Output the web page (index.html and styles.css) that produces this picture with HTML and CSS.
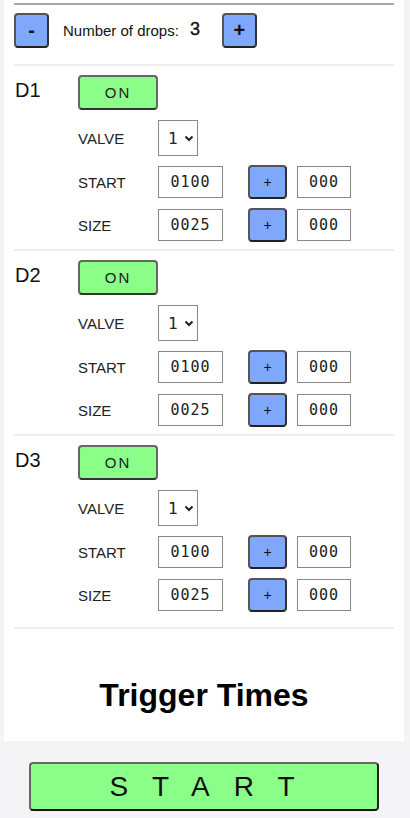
FILE: index.html
```html
<!DOCTYPE html>
<html lang="en">
<head>
  <meta charset="UTF-8" />
  <meta name="viewport" content="width=device-width, initial-scale=1.0"/>
  <title>Drops</title>
  <link rel="stylesheet" href="styles.css">
</head>
<body>

<div class="panel">
  <hr class="top-line">

  <!-- number of drops -->
  <div class="drops-count">
    <button class="btn-blue btn-square">-</button>
    <span class="count-label">Number of drops:</span>
    <span class="count-value">3</span>
    <button class="btn-blue btn-square btn-plus">+</button>
  </div>

  <div class="drop">
    <div class="drop-head">
      <span class="drop-name">D1</span>
      <button class="btn-on">ON</button>
    </div>
    <div class="row">
      <span class="row-label">VALVE</span>
      <div class="select"><select><option>1</option><option>2</option></select>
        <svg width="10" height="7" viewBox="0 0 10 7"><path d="M1.5 1.5 L5 5 L8.5 1.5" fill="none" stroke="#222" stroke-width="2"/></svg>
      </div>
    </div>
    <div class="row">
      <span class="row-label">START</span>
      <input class="num num-wide" type="text" value="0100">
      <button class="btn-blue btn-small">+</button>
      <input class="num" type="text" value="000">
    </div>
    <div class="row">
      <span class="row-label">SIZE</span>
      <input class="num num-wide" type="text" value="0025">
      <button class="btn-blue btn-small">+</button>
      <input class="num" type="text" value="000">
    </div>
  </div>

  <div class="drop">
    <div class="drop-head">
      <span class="drop-name">D2</span>
      <button class="btn-on">ON</button>
    </div>
    <div class="row">
      <span class="row-label">VALVE</span>
      <div class="select"><select><option>1</option><option>2</option></select>
        <svg width="10" height="7" viewBox="0 0 10 7"><path d="M1.5 1.5 L5 5 L8.5 1.5" fill="none" stroke="#222" stroke-width="2"/></svg>
      </div>
    </div>
    <div class="row">
      <span class="row-label">START</span>
      <input class="num num-wide" type="text" value="0100">
      <button class="btn-blue btn-small">+</button>
      <input class="num" type="text" value="000">
    </div>
    <div class="row">
      <span class="row-label">SIZE</span>
      <input class="num num-wide" type="text" value="0025">
      <button class="btn-blue btn-small">+</button>
      <input class="num" type="text" value="000">
    </div>
  </div>

  <div class="drop drop-last">
    <div class="drop-head">
      <span class="drop-name">D3</span>
      <button class="btn-on">ON</button>
    </div>
    <div class="row">
      <span class="row-label">VALVE</span>
      <div class="select"><select><option>1</option><option>2</option></select>
        <svg width="10" height="7" viewBox="0 0 10 7"><path d="M1.5 1.5 L5 5 L8.5 1.5" fill="none" stroke="#222" stroke-width="2"/></svg>
      </div>
    </div>
    <div class="row">
      <span class="row-label">START</span>
      <input class="num num-wide" type="text" value="0100">
      <button class="btn-blue btn-small">+</button>
      <input class="num" type="text" value="000">
    </div>
    <div class="row">
      <span class="row-label">SIZE</span>
      <input class="num num-wide" type="text" value="0025">
      <button class="btn-blue btn-small">+</button>
      <input class="num" type="text" value="000">
    </div>
  </div>

  <h2 class="trigger-title">Trigger Times</h2>
</div>

<div class="footer">
  <button class="btn-start">START</button>
</div>

</body>
</html>
```

FILE: styles.css
```css
body {
  margin: 0;
  padding: 0;
  background-color: #f4f4f6;
  font-family: "Liberation Sans", Arial, sans-serif;
  color: #111;
}

.panel {
  margin: 0 6px 0 4px;
  padding: 3px 10px 0 10px;
  background-color: #fff;
  height: 738px;
}

.top-line {
  margin: 0;
  border: none;
  height: 2px;
  background-color: #a6a6a6;
}

.drops-count {
  display: flex;
  align-items: center;
  padding: 8px 0 16px 0;
  border-bottom: 2px solid #eeeeef;
}

.btn-blue {
  background-color: #7fa7fb;
  border: 2px solid #555;
  border-bottom-color: #222;
  border-right-color: #333;
  border-radius: 4px;
  color: #111;
  font-family: "Liberation Sans", Arial, sans-serif;
  padding: 0;
  cursor: pointer;
}

.btn-square {
  width: 35px;
  height: 35px;
  font-size: 20px;
  font-weight: bold;
}

.btn-plus {
  margin-left: 22px;
}

.count-label {
  font-size: 15px;
  margin-left: 14px;
}

.count-value {
  font-size: 18px;
  margin-left: 11px;
  margin-top: -2px;
  -webkit-text-stroke: 0.4px #111;
}

.drop {
  padding: 9px 0 7px 0;
  border-bottom: 2px solid #eeeeef;
  display: flex;
  flex-direction: column;
  gap: 9px;
}

.drop-last {
  padding-bottom: 15px;
}

.drop-head {
  display: flex;
  align-items: center;
  margin-bottom: 1px;
}

.drop-name {
  width: 64px;
  padding-left: 1px;
  box-sizing: border-box;
  font-size: 20px;
  margin-top: -4px;
}

.btn-on {
  width: 80px;
  height: 35px;
  background-color: #8bfd89;
  border: 2px solid #666;
  border-bottom-color: #333;
  border-radius: 4px;
  font-family: "Liberation Sans", Arial, sans-serif;
  font-size: 15px;
  letter-spacing: 2px;
  color: #222;
  padding: 0;
}

.row {
  display: flex;
  align-items: center;
  padding-left: 64px;
  height: 34px;
}

.row:nth-child(2) {
  height: 36px;
}

.row-label {
  width: 80px;
  font-size: 15px;
  color: #222;
}

.select {
  display: flex;
  align-items: center;
  width: 40px;
  height: 36px;
  box-sizing: border-box;
  border: 1px solid #888;
  background-color: #fff;
  padding-left: 9px;
  gap: 3px;
}

.select select {
  appearance: none;
  -webkit-appearance: none;
  border: none;
  background: transparent;
  padding: 0;
  font-family: "DejaVu Sans Mono", monospace;
  font-size: 16px;
  color: #222;
  width: 13px;
  outline: none;
}

.num {
  height: 32px;
  width: 54px;
  box-sizing: border-box;
  border: 1px solid #888;
  text-align: center;
  font-family: "DejaVu Sans Mono", monospace;
  font-size: 15px;
  letter-spacing: 1px;
  color: #222;
  padding: 0;
}

.num-wide {
  width: 65px;
}

.btn-small {
  width: 39px;
  height: 34px;
  margin: 0 10px 0 25px;
  font-size: 14px;
}

.trigger-title {
  margin: 48px 0 0 0;
  text-align: center;
  font-size: 32px;
  font-weight: bold;
  color: #000;
}

.footer {
  display: flex;
  justify-content: center;
  padding: 21px 0 0 0;
}

.btn-start {
  width: 350px;
  height: 49px;
  margin-left: -2px;
  background-color: #8bfd89;
  border: 2px solid #666;
  border-right-color: #222;
  border-bottom-color: #111;
  border-radius: 4px;
  font-family: "Liberation Sans", Arial, sans-serif;
  font-size: 28px;
  letter-spacing: 24px;
  text-indent: 20px;
  color: #111;
  padding: 0;
}
```
